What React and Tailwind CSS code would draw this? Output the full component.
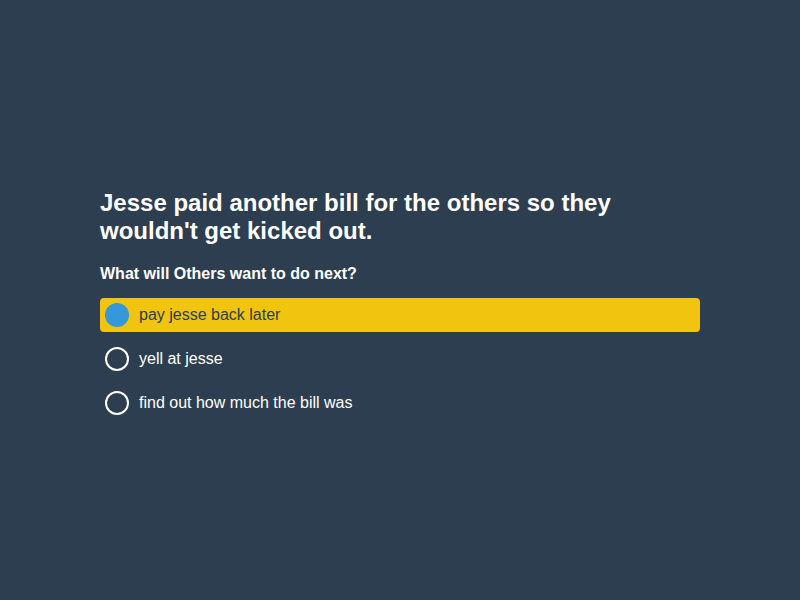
export default function App() {
  const options = ["pay jesse back later", "yell at jesse", "find out how much the bill was"];
  return (
    <div className="min-h-screen w-full bg-[#2d3e50] flex items-center justify-center" style={{ fontFamily: '"Liberation Sans", Arial, sans-serif' }}>
      <div className="w-[600px] pt-[9px]">
        <h1 className="text-[24px] leading-[28px] font-bold text-white">Jesse paid another bill for the others so they wouldn't get kicked out.</h1>
        <h2 className="mt-[19px] text-[16px] leading-[20px] font-bold text-white">What will Others want to do next?</h2>
        <div className="mt-[14px] flex flex-col gap-[10px]">
          {options.map((o, i) => (
            <div key={o} className={`h-[34px] flex items-center rounded-[4px] px-[5px] ${i === 0 ? "bg-[#f1c40f] text-[#2c3e50]" : "text-white"}`}>
              {i === 0 ? (
                <div className="w-[24px] h-[24px] rounded-full bg-[#3498db]" />
              ) : (
                <div className="w-[24px] h-[24px] rounded-full border-2 border-white" />
              )}
              <span className="ml-[10px] text-[16px]">{o}</span>
            </div>
          ))}
        </div>
      </div>
    </div>
  );
}
